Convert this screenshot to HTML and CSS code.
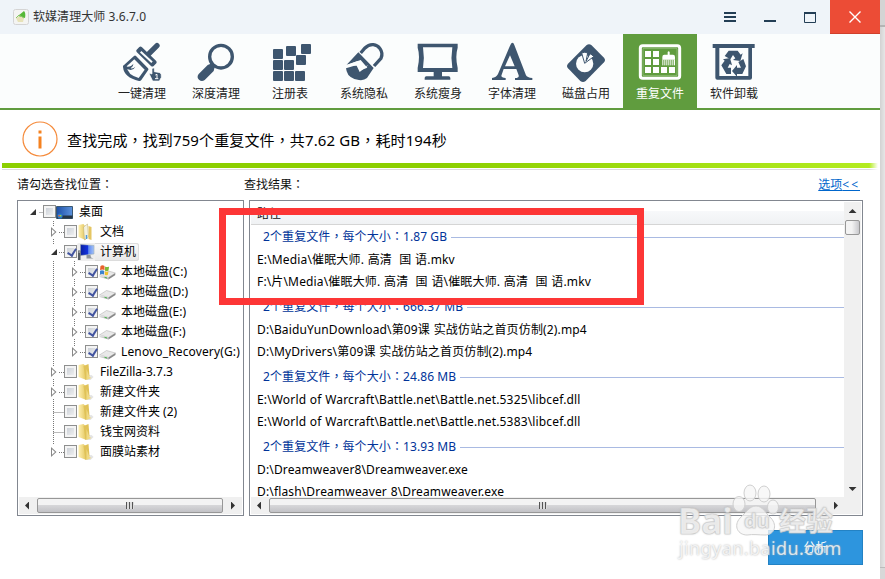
FILE: index.html
```html
<!DOCTYPE html>
<html>
<head>
<meta charset="utf-8">
<title>软媒清理大师</title>
<link rel="stylesheet" href="styles.css">
</head>
<body>
<svg class="defs" width="0" height="0">
  <defs>
    <linearGradient id="gf" x1="0" x2="1"><stop offset="0" stop-color="#fff0b0"/><stop offset="1" stop-color="#e2c55c"/></linearGradient>
    <linearGradient id="gd" x1="0" y1="0" x2="0" y2="1"><stop offset="0" stop-color="#f4f4f4"/><stop offset="1" stop-color="#a9a9a9"/></linearGradient>
    <linearGradient id="gs" x1="0" x2="1"><stop offset="0" stop-color="#0a1fa0"/><stop offset=".55" stop-color="#1233e0"/><stop offset=".6" stop-color="#5f8af0"/><stop offset="1" stop-color="#a5c3f8"/></linearGradient>
    <linearGradient id="gk" x1="0" x2="1"><stop offset="0" stop-color="#1c4fa8"/><stop offset="1" stop-color="#5d93dd"/></linearGradient>
    <symbol id="folder" viewBox="0 0 17 18"><path d="M8 13l6-1 2 2-3 3H8z" fill="#ddd" opacity=".8"/><path d="M1 2l5-1 3 3v13l-8-3z" fill="url(#gf)"/><path d="M6 3l5-2 1 12-4 4z" fill="#e0c258"/><path d="M9 6l3 8 2 1-5 2z" fill="#efd983"/></symbol>
    <symbol id="docs" viewBox="0 0 17 18"><path d="M1 2l5-1 2 3v13l-7-3z" fill="url(#gf)"/><path d="M6 4l4-3 1 13-4 3z" fill="#f3f1df" stroke="#b9a768" stroke-width=".5"/><path d="M11 3l3 1v13l-3-1z" fill="#e5c663"/><path d="M9 12v4" stroke="#4e9bd8" stroke-width="1.500"/></symbol>
    <symbol id="drive" viewBox="0 0 17 18"><path d="M1 12l7-4.500 9 2.500-7 4.500z" fill="#e9e9e9" stroke="#b5b5b5" stroke-width=".6"/><path d="M1 12l9 2.500v2l-9-2.500z" fill="url(#gd)"/><path d="M10 14.500l7-4.500v2l-7 4.500z" fill="#888"/><path d="M6 14.300l2.500.7" stroke="#48b54a"/></symbol>
    <symbol id="windrive" viewBox="0 0 17 18"><use href="#drive"/><path d="M2 3q2-1.500 4 0v4q-2-1-4.500 0z" fill="#e8622c"/><path d="M6.600 3.500q2 1 4 0L10 7.500q-2 1-3.600 0z" fill="#7dba3a"/><path d="M1.500 7.800q2-1 4 0v3.700q-2-1-4 0z" fill="#3a83cf"/><path d="M6.300 8.300q2 1 3.700 0l-.6 3.500q-1.600 1-3.100 0z" fill="#f2c230"/></symbol>
    <symbol id="computer" viewBox="0 0 17 18"><path d="M3 1.500l13.500 1v8.500L3 12.500z" fill="url(#gs)" stroke="#9aa" stroke-width=".5"/><path d="M9 12h4l.5 2.500 2.500 1H9z" fill="#8e959b"/><path d="M.5 7.500h2.500v9.500H.5z" fill="#555c64"/><path d="M1 9h1.500" stroke="#ddd"/></symbol>
    <symbol id="desktop" viewBox="0 0 18 18"><path d="M.5 3.500h16v12H.5z" fill="url(#gk)" stroke="#3b5872"/><path d="M1 12.500h15.500v3H1z" fill="#263746"/><circle cx="4" cy="13" r="2.600" fill="#2c7bcc"/><path d="M2.500 12h1.400v1.500H2.500z" fill="#f06a2a"/><path d="M4 12h1.400v1.500H4z" fill="#9ad03f"/></symbol>
  </defs>
</svg>
<div class="screen">
<div class="window">
  <header class="titlebar">
    <svg class="app-icon" width="16" height="16" viewBox="0 0 16 16"><rect x=".5" y=".5" width="15" height="15" rx="2" fill="#f4f4f2" stroke="#d4d4d4"/><path d="M3 9l4-2 4 2-1 4H5z" fill="#e7e2b8"/><path d="M5 7l6-5q2 2 1 7l-3-1z" fill="#55b836"/><path d="M3 9l3-3 5 3" stroke="#8bc667" fill="none"/></svg>
    <h1 class="title">软媒清理大师 3.6.7.0</h1>
    <div class="controls">
      <span class="ctl"><svg width="12" height="10" viewBox="0 0 12 10"><path d="M0 1h12M0 5h12M0 9h12" stroke="#233e55" stroke-width="2"/></svg></span>
      <span class="ctl ctl-min"><svg width="12" height="2"><path d="M0 1h12" stroke="#233e55" stroke-width="2"/></svg></span>
      <span class="ctl"><svg width="12" height="11"><path d="M.5 1h11v9.500H.5z" fill="none" stroke="#233e55"/><path d="M0 1h12" stroke="#233e55" stroke-width="2"/></svg></span>
      <span class="ctl close"><svg width="12" height="12"><path d="M.5.5l11 11M11.500.5l-11 11" stroke="#fff" stroke-width="1.400"/></svg></span>
    </div>
  </header>
  <nav class="toolbar">
    <a class="tool"><svg viewBox="-39 -6 222 150" fill="#3e566f"><path d="M117 29L90 56" stroke="#3e566f" stroke-width="16" stroke-linecap="round"/><path d="M56 48q-3-4 0-7l8-8q4-3 8 1l42 40q4 4 1 8l-8 8q-4 3-8 0z"/><path d="M68 47l34 32" stroke="#fbfdfd" stroke-width="6"/><path d="M48 60q3-3 6 0l36 37q3 3 0 6l-20 29q-3 4-7 3-45-10-48-42-1-4 3-6z"/><path d="M49 70L26 91q2 26 36 35l18-25z" fill="#fbfdfd"/><path d="M22 91q16 4 24-8 1 8-8 14 9 1 14-5-3 8-14 10l-14-4z"/><path d="M93 112l9 2V98q4-4 7 0v9l17 3q5 3 4 14l-6 11h-20z" stroke="#fbfdfd" stroke-width="2"/><path d="M112 117l5-2v13M111 128h10" fill="none" stroke="#fff" stroke-width="3"/></svg><span>一键清理</span></a>
    <a class="tool"><svg viewBox="537 102 222 150"><circle cx="663" cy="170" r="34" fill="none" stroke="#3e566f" stroke-width="10"/><path d="M636 190l8 11-3 12-27 27q-9 6-17-1t-1-17l27-27z" fill="#3e566f"/></svg><span>深度清理</span></a>
    <a class="tool"><svg viewBox="-21 12 222 150" fill="#3e566f"><rect x="39" y="57" width="30" height="30" rx="3"/><rect x="78" y="48" width="30" height="30" rx="3"/><rect x="123" y="42" width="30" height="30" rx="3"/><rect x="39" y="90" width="30" height="30" rx="3"/><rect x="72" y="90" width="30" height="30" rx="3"/><rect x="108" y="75" width="30" height="30" rx="3"/><rect x="39" y="123" width="30" height="30" rx="3"/><rect x="72" y="123" width="30" height="30" rx="3"/><rect x="105" y="123" width="30" height="30" rx="3"/></svg><span>注册表</span></a>
    <a class="tool"><svg viewBox="201 12 222 150"><path d="M302 69l13-15c16-16 36-11 45 2q10 14 3 29l-21 23" fill="none" stroke="#3e566f" stroke-width="10"/><path d="M295 67l46 47-20 30q-9 8-24 6-31-4-37-26l-2-9 35-11 9 17 20-8-20-23-42 14z" fill="#3e566f"/><path d="M259 106l34-13 11 20 21-7-26 20-9-19z" fill="#fbfdfd"/></svg><span>系统隐私</span></a>
    <a class="tool"><svg viewBox="423 12 222 150"><path d="M473 41h120v12q-8 26 0 61v12H473v-12q8-35 0-61zm16 11q5 31 0 62h88q-5-31 0-62z" fill="#3e566f" fill-rule="evenodd"/><path d="M521 125h25v14h20q5 0 5 5v5h-77v-5q0-5 5-5h22z" fill="#3e566f"/></svg><span>系统瘦身</span></a>
    <a class="tool"><svg viewBox="645 12 222 150"><path d="M757 38q4 0 6 7l35 91q3 7 19 8v6h-52v-6q13 0 11-8l-7-19h-38l-6 17q-4 9 12 10v6h-41v-6q13-1 18-12l34-80q5-14 9-14zm-7 38l-15 33h29z" fill="#3e566f" fill-rule="evenodd"/></svg><span>字体清理</span></a>
    <a class="tool"><svg viewBox="27 102 222 150"><path d="M140 135q7-5 14 0l38 38q6 7 0 14l-55 56q-8 6-16 0l-37-38q-6-7 0-14z" fill="#3e566f"/><circle cx="134" cy="191" r="26" fill="#fbfdfd"/><path d="M134 190l-9-31q10-5 18 0l-5 25 12-23q7 3 11 9z" fill="#fbfdfd" stroke="#3e566f" stroke-width="3"/></svg><span>磁盘占用</span></a>
    <a class="tool active"><svg viewBox="249 102 222 150" fill="#fff"><rect x="301" y="137" width="118" height="98" rx="7" fill="none" stroke="#fff" stroke-width="9"/><rect x="309" y="145" width="102" height="82" rx="3" fill="none" stroke="#fff" stroke-width="2" opacity=".4"/><path d="M315 153h18v18h-18zM339 153h18v18h-18zM315 177h18v18h-18zM339 177h18v18h-18zM315 201h18v18h-18zM339 201h18v18h-18zM363 201h18v18h-18zM387 201h18v18h-18zM383 156q3-4 6 0v8h10q6 0 6 7v8h-38v-8q0-7 6-7h10z"/><path d="M368.500 179v17m6-17v17m6-17v17m6-17v17m6-17v17m6-17v17m5-17v17" stroke="#fff" stroke-width="3"/></svg><span>重复文件</span></a>
    <a class="tool"><svg viewBox="471 102 222 150" fill="#3e566f"><path d="M518 132h126v12h-8v89q0 6-6 6h-98q-6 0-6-6v-89h-8zm20 12v84h87v-84z" fill-rule="evenodd"/><path d="M557 164l9-12h27l9 12 6-4-7 23-22-3 7-5-7-10-8 13-17-10z"/><path d="M549 178l21-4 6 22-7-4-6 11h10v19h-14l-15-26 10-14z"/><path d="M610 177l8 22-11 23h-16v8l-15-17 15-18v8h12l-8-17z"/></svg><span>软件卸载</span></a>
  </nav>
  <section class="status">
    <svg class="info" width="36" height="36" viewBox="0 0 36 36"><circle cx="18" cy="18" r="17" fill="none" stroke="#f58a3a" stroke-width="1.200"/><path d="M16.500 9.500h3v3h-3zM16.500 15.500h3v12h-3z" fill="#f58220"/></svg>
    <p class="message">查找完成<i>，</i>找到759个重复文件<i>，</i>共7.62 GB<i>，</i>耗时194秒</p>
  </section>
  <div class="progress"></div>
  <div class="captions"><span class="cap-left">请勾选查找位置<i>：</i></span><span class="cap-right">查找结果<i>：</i></span><a class="options">选项<b>&lt;&lt;</b></a></div>
  <main class="panes">
    <section class="pane tree">
      <svg class="guides" width="225" height="296"><path d="M21.500 11.500h5M35.500 20v6M35.500 38v6M35.500 60v106M35.500 178v8M35.500 198v38M41 31.500h5M41 51.500h5M41 171.500h5M41 191.500h5M35.500 211.500h11M35.500 231.500h11M35.500 236v8M41 251.500h5M56.500 60v6M56.500 78v8M56.500 98v8M56.500 118v8M56.500 138v8M62 71.500h5M62 91.500h5M62 111.500h5M62 131.500h5M62 151.500h5" stroke="#777" stroke-dasharray="1 1" fill="none"/></svg>
      <ul class="nodes">
        <li class="node l1"><i class="arr open"></i><i class="cb"></i><svg class="ico"><use href="#desktop"/></svg><span>桌面</span></li>
        <li class="node l2"><i class="arr"></i><i class="cb"></i><svg class="ico"><use href="#docs"/></svg><span>文档</span></li>
        <li class="node l2 selected"><i class="arr open"></i><i class="cb on"></i><svg class="ico"><use href="#computer"/></svg><span>计算机</span></li>
        <li class="node l3"><i class="arr"></i><i class="cb on"></i><svg class="ico"><use href="#windrive"/></svg><span>本地磁盘(C:)</span></li>
        <li class="node l3"><i class="arr"></i><i class="cb on"></i><svg class="ico"><use href="#drive"/></svg><span>本地磁盘(D:)</span></li>
        <li class="node l3"><i class="arr"></i><i class="cb on"></i><svg class="ico"><use href="#drive"/></svg><span>本地磁盘(E:)</span></li>
        <li class="node l3"><i class="arr"></i><i class="cb on"></i><svg class="ico"><use href="#drive"/></svg><span>本地磁盘(F:)</span></li>
        <li class="node l3"><i class="arr"></i><i class="cb on"></i><svg class="ico"><use href="#drive"/></svg><span class="wide">Lenovo_Recovery(G:)</span></li>
        <li class="node l2"><i class="arr"></i><i class="cb"></i><svg class="ico"><use href="#folder"/></svg><span>FileZilla-3.7.3</span></li>
        <li class="node l2"><i class="arr"></i><i class="cb"></i><svg class="ico"><use href="#folder"/></svg><span>新建文件夹</span></li>
        <li class="node l2"><i class="arr none"></i><i class="cb"></i><svg class="ico"><use href="#folder"/></svg><span>新建文件夹 (2)</span></li>
        <li class="node l2"><i class="arr none"></i><i class="cb"></i><svg class="ico"><use href="#folder"/></svg><span>钱宝网资料</span></li>
        <li class="node l2"><i class="arr"></i><i class="cb"></i><svg class="ico"><use href="#folder"/></svg><span>面膜站素材</span></li>
      </ul>
      <div class="hbar"><i class="tri left"></i><div class="thumb"><i class="grip"></i></div><i class="tri right"></i></div>
    </section>
    <section class="pane results">
      <div class="listing">
        <div class="head">路径</div>
        <div class="groups">
          <div class="group"><h2><span>2个重复文件<i>，</i>每个大小<i>：</i>1.87 GB</span></h2><p>E:\Media\催眠大师. 高清&nbsp; 国 语.mkv</p><p>F:\片\Media\催眠大师. 高清&nbsp; 国 语\催眠大师. 高清&nbsp; 国 语.mkv</p></div>
          <div class="group"><h2><span>2个重复文件<i>，</i>每个大小<i>：</i>666.37 MB</span></h2><p>D:\BaiduYunDownload\第09课 实战仿站之首页仿制(2).mp4</p><p>D:\MyDrivers\第09课 实战仿站之首页仿制(2).mp4</p></div>
          <div class="group"><h2><span>2个重复文件<i>，</i>每个大小<i>：</i>24.86 MB</span></h2><p>E:\World of Warcraft\Battle.net\Battle.net.5325\libcef.dll</p><p>E:\World of Warcraft\Battle.net\Battle.net.5383\libcef.dll</p></div>
          <div class="group"><h2><span>2个重复文件<i>，</i>每个大小<i>：</i>13.93 MB</span></h2><p>D:\Dreamweaver8\Dreamweaver.exe</p><p>D:\flash\Dreamweaver 8\Dreamweaver.exe</p></div>
        </div>
        <div class="hbar"><i class="tri left"></i><div class="thumb"><i class="grip"></i></div><i class="tri right"></i></div>
      </div>
      <div class="vbar"><i class="tri up"></i><div class="vthumb"></div><i class="tri down"></i></div>
    </section>
  </main>
  <footer class="footer"><button class="analyze">分析</button></footer>
</div>
<aside class="edge"></aside>
<div class="highlight"></div>
<div class="watermark">
  <svg class="paw" width="48" height="52" viewBox="0 0 48 52" fill="#f6f6f6" fill-opacity=".8" stroke="#cfcfcf"><ellipse cx="7" cy="20" rx="6" ry="7.500"/><ellipse cx="18" cy="9" rx="6" ry="8"/><ellipse cx="32" cy="10" rx="6" ry="8"/><ellipse cx="41" cy="23" rx="5.500" ry="7"/><path d="M24 22c7 0 9 7 15 12 7 8 3 17-6 17-6 0-12-1-18 0-9 0-14-9-7-17 6-5 9-12 16-12z"/></svg>
  <div class="wm-name"><span class="wm-bai">Bai</span><span class="wm-du">du</span><span class="wm-exp">经验</span></div>
  <div class="wm-url">jingyan.baidu.com</div>
</div>
</div>
</body>
</html>
```
FILE: styles.css
```css
* { box-sizing: border-box; }
body { margin: 0; width: 885px; height: 579px; overflow: hidden; background: #fff; color: #111; font: 12px/20px "Noto Sans", "Noto Sans CJK SC", sans-serif; }
h1, h2, p, ul { margin: 0; padding: 0; font-size: inherit; font-weight: normal; list-style: none; }
i { font-style: normal; font-family: "Noto Sans CJK TC", sans-serif; line-height: 1; }
.defs { position: absolute; }
.screen { position: relative; display: flex; width: 885px; height: 579px; overflow: hidden; }
.window { width: 880px; height: 579px; background: #fff; }
.edge { width: 5px; background: linear-gradient(#d4d4d4 0 25px, #b4b4b4 25px 27px, transparent 27px 567px, #bbb 567px 568px, #d8d8d8 568px), linear-gradient(90deg, #d2d2d2, #e6e6e6); }

.titlebar { display: flex; align-items: center; height: 34px; padding-left: 13px; background: #eff4f9; }
.title { margin-left: 4px; color: #333; white-space: nowrap; letter-spacing: .06px; }
.controls { display: flex; margin-left: auto; height: 34px; }
.ctl { display: flex; align-items: center; justify-content: center; width: 40px; }
.ctl-min { padding-top: 8px; }
.close { width: 50px; background: #ec4c36; border-bottom: 1px solid #d0402c; }

.toolbar { display: flex; height: 76px; padding-left: 105px; background: #fbfdfd; border-bottom: 2px solid #609c3e; }
.tool { display: flex; flex-direction: column; width: 74px; height: 74px; text-align: center; color: #222; white-space: nowrap; }
.tool svg { display: block; width: 74px; height: 50px; }
.active { background: #609c3e; color: #fff; }

.status { display: flex; align-items: center; height: 53px; padding: 5px 0 0 22px; }
.message { margin: 2px 0 0 9px; font-size: 15px; white-space: nowrap; color: #000; letter-spacing: .13px; }
.progress { height: 7px; margin: 0 2px; background: linear-gradient(90deg, transparent 99%, #fff), linear-gradient(transparent 0 5px, #fff 5px 6px, #ddd 6px), linear-gradient(90deg, #8ccf00 0 50%, #b4ec20); }
.captions { display: flex; height: 30px; padding: 5px 20px 0 17px; }
.cap-left { width: 227px; }
.options { margin-left: auto; color: #0066cc; text-decoration: underline; }
.options b { font-weight: normal; letter-spacing: 2px; }

.panes { display: flex; gap: 5px; padding-left: 17px; }
.pane { height: 316px; border: 1px solid #828790; background: #fff; }
.tree { position: relative; display: flex; flex-direction: column; justify-content: space-between; width: 227px; padding: 1px; }
.guides { position: absolute; left: 0; top: 0; }
.nodes { position: relative; }
.node { display: flex; align-items: center; height: 20px; white-space: nowrap; color: #000; }
.l1 { padding-left: 10px; }
.l2 { padding-left: 31px; }
.l3 { padding-left: 52px; }
.arr { width: 10px; height: 10px; margin: 0 5px 0 -1px; background: #888; clip-path: polygon(20% 0, 75% 50%, 20% 100%, 20% 0, 30% 22%, 30% 78%, 60% 50%, 30% 22%); }
.open { background: #333; clip-path: polygon(80% 20%, 80% 80%, 20% 80%); }
.none { visibility: hidden; }
.cb { width: 13px; height: 13px; margin-top: -1px; border: 1px solid #8e8f8f; background: linear-gradient(135deg, #c3c9d1, #f6f6f6); box-shadow: inset 0 0 0 2px #f4f4f4; }
.on { position: relative; }
.on::after { content: ""; position: absolute; left: 4px; top: 1px; width: 4px; height: 7px; border: solid #4355a0; border-width: 0 2px 2px 0; transform: rotate(32deg); }
.ico { width: 18px; height: 18px; }
.node span { padding: 0 3px 0 5px; line-height: 18px; }
.node .wide { letter-spacing: .14px; padding-right: 0; }
.selected .ico { background: #eee; border-radius: 2px 0 0 2px; }
.selected span { height: 18px; border-radius: 0 3px 3px 0; background: linear-gradient(#fafafa, #e7e7e7); box-shadow: inset -1px 0 #dcdcdc, inset 0 1px #dcdcdc, inset 0 -1px #dcdcdc; }

.hbar { display: flex; align-items: center; height: 17px; background: #f0f0f0; }
.thumb { display: flex; align-items: center; justify-content: center; height: 15px; border: 1px solid #979797; border-radius: 2px; background: linear-gradient(#f3f3f3 0 45%, #d6d6d8 50%, #c2c2c6); }
.tree .thumb { width: 186px; margin: 0 8px; }
.results .thumb { width: 547px; margin: 0 18px 0 8px; }
.grip { width: 8px; height: 7px; background: repeating-linear-gradient(90deg, #555 0 1px, #ddd 1px 3px); }
.tri { flex: none; width: 4px; height: 8px; background: #333; }
.left { margin-left: 6px; clip-path: polygon(100% 0, 100% 100%, 0 50%); }
.right { clip-path: polygon(0 0, 100% 50%, 0 100%); }
.up, .down { width: 8px; height: 4px; }
.up { clip-path: polygon(50% 0, 100% 100%, 0 100%); }
.down { clip-path: polygon(0 0, 100% 0, 50% 100%); }

.results { display: flex; justify-content: space-between; width: 614px; padding: 1px; }
.listing { display: flex; flex-direction: column; width: 593px; }
.head { height: 23px; padding: 2px 0 0 6px; border-bottom: 1px solid #d5d5d5; background: linear-gradient(#fff 0 9px, #f7f8fa 9px, #f0f2f4); }
.groups { height: 273px; padding-top: 1px; overflow: hidden; }
.group { height: 70px; white-space: nowrap; color: #000; }
.group h2 { display: flex; align-items: center; gap: 4px; height: 22px; padding-left: 12px; color: #003399; letter-spacing: .09px; }
.group h2::after { content: ""; flex: 1; height: 1px; background: #a9bae2; }
.group p { position: relative; top: 1px; height: 22px; padding-left: 6px; line-height: 22px; letter-spacing: .15px; word-spacing: .4px; }
.vbar { display: flex; flex-direction: column; align-items: center; width: 17px; padding-top: 7px; background: #f0f0f0; }
.vthumb { width: 15px; height: 15px; margin-top: 7px; border: 1px solid #979797; border-radius: 2px; background: linear-gradient(90deg, #f3f3f3 45%, #c8c8cc); }
.down { margin: auto 0 23px; }

.footer { display: flex; justify-content: flex-end; padding: 14px 17px 0 0; }
.analyze { width: 95px; height: 35px; padding: 0; border: 1px solid #2382c4; background: #2d95de; color: #fff; font: inherit; }

.highlight { position: absolute; left: 219px; top: 208px; width: 425px; height: 97px; border: 7px solid #fd3636; }

.watermark { position: absolute; left: 677px; top: 484px; width: 170px; height: 80px; color: rgba(255,255,255,.75); text-shadow: 0 0 2px #aaa; }
.paw { position: absolute; left: 55px; top: 0; }
.wm-name { position: absolute; left: 1px; top: 20px; display: flex; align-items: center; height: 34px; font-weight: bold; line-height: 34px; -webkit-text-stroke: .6px #ccc; }
.wm-bai { width: 66px; font-size: 35px; }
.wm-du { width: 35px; font-size: 20px; }
.wm-exp { font-size: 27px; }
.wm-url { position: absolute; left: 2px; top: 52px; font-size: 18px; line-height: 24px; letter-spacing: .4px; white-space: nowrap; }
```
